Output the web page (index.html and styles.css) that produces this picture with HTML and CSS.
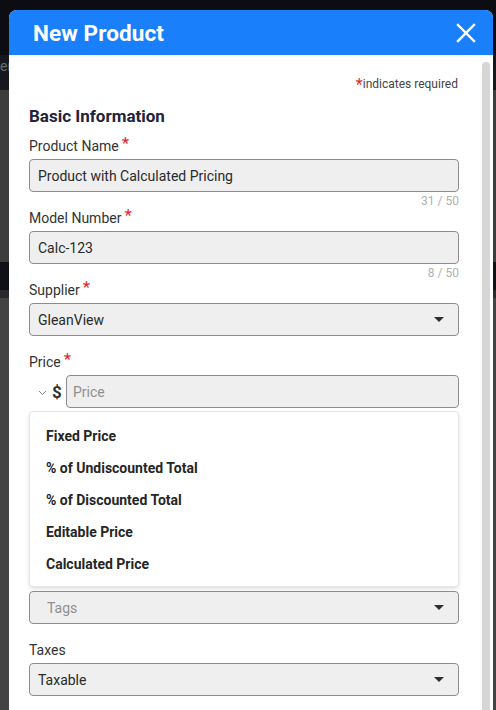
FILE: index.html
```html
<!DOCTYPE html>
<html lang="en">
<head>
<meta charset="utf-8">
<title>New Product</title>
<link rel="stylesheet" href="styles.css">
</head>
<body>
<div class="backdrop">
  <span class="backdrop-text">er</span>
</div>
<div class="dialog">
  <header class="dialog-header">
    <h1 class="dialog-title">New Product</h1>
    <button class="close-btn" aria-label="Close">
      <svg width="20" height="20" viewBox="0 0 20 20"><path d="M2 2 L18 18 M18 2 L2 18" stroke="#fff" stroke-width="2.4" stroke-linecap="square" fill="none"/></svg>
    </button>
  </header>
  <div class="dialog-body">
    <div class="content">
      <div class="required-note"><span class="req">*</span>indicates required</div>
      <h2 class="section-title">Basic Information</h2>

      <div class="field">
        <label class="field-label">Product Name<span class="req sup">*</span></label>
        <div class="input">Product with Calculated Pricing</div>
        <div class="helper">31 / 50</div>
      </div>

      <div class="field">
        <label class="field-label">Model Number<span class="req sup">*</span></label>
        <div class="input">Calc-123</div>
        <div class="helper">8 / 50</div>
      </div>

      <div class="field">
        <label class="field-label">Supplier<span class="req sup">*</span></label>
        <div class="input select"><span>GleanView</span><span class="caret"></span></div>
        <div class="helper"></div>
      </div>

      <div class="field price-field">
        <label class="field-label">Price<span class="req sup">*</span></label>
        <div class="price-row">
          <span class="chev">
            <svg width="9" height="6" viewBox="0 0 9 6"><path d="M1 1 L4.5 4.5 L8 1" stroke="#888" stroke-width="1" fill="none"/></svg>
          </span>
          <span class="dollar">$</span>
          <div class="input placeholder grow">Price</div>
        </div>
        <div class="under-menu"></div>
        <ul class="menu">
          <li>Fixed Price</li>
          <li>% of Undiscounted Total</li>
          <li>% of Discounted Total</li>
          <li>Editable Price</li>
          <li>Calculated Price</li>
        </ul>
      </div>

      <div class="field">
        <div class="input select"><span class="placeholder indent">Tags</span><span class="caret"></span></div>
        <div class="helper"></div>
      </div>

      <div class="field">
        <label class="field-label">Taxes</label>
        <div class="input select"><span>Taxable</span><span class="caret"></span></div>
      </div>
    </div>
    <div class="scroll-track"><div class="scroll-thumb"></div></div>
  </div>
</div>
</body>
</html>
```

FILE: styles.css
```css
* { box-sizing: border-box; }
html, body { margin: 0; padding: 0; }
body {
  width: 496px;
  height: 710px;
  overflow: hidden;
  position: relative;
  font-family: Roboto, "Liberation Sans", Arial, sans-serif;
  background: linear-gradient(to bottom,
    #0c0d12 0, #0c0d12 55px,
    #16181e 55px, #16181e 90px,
    #3d3d3d 90px, #3d3d3d 262px,
    #0f1116 262px, #0f1116 290px,
    #2a2a2c 290px, #2a2a2c 298px,
    #434343 298px);
}
.backdrop {
  position: absolute;
  left: 0; top: 0; width: 496px; height: 710px;
}
.backdrop-text {
  position: absolute;
  left: 0; top: 58px;
  font-size: 14px;
  color: #6a6c72;
}
.dialog {
  position: relative;
  margin: 10px 0 0 9px;
  width: 484px;
  height: 700px;
  background: #fff;
  border-radius: 8px 8px 0 0;
  overflow: hidden;
  display: flex;
  flex-direction: column;
}
.dialog-header {
  height: 45px;
  flex: none;
  background: #1a7ffb;
  display: flex;
  align-items: center;
  justify-content: space-between;
  padding: 0 17px 0 24px;
}
.dialog-title {
  margin: 0;
  color: #fff;
  font-size: 22.5px;
  font-weight: 700;
  letter-spacing: 0.1px;
}
.close-btn {
  border: 0;
  background: none;
  padding: 0;
  width: 20px;
  height: 20px;
  display: flex;
}
.dialog-body {
  flex: 1;
  display: flex;
  min-height: 0;
}
.content {
  flex: 1;
  padding: 21px 19px 0 20px;
}
.scroll-track {
  width: 15px;
  flex: none;
  padding: 7px 3px 0 4px;
}
.scroll-thumb {
  width: 8px;
  height: 100%;
  background: #d6d6d6;
  border-radius: 4px 4px 0 0;
}
.required-note {
  text-align: right;
  font-size: 12px;
  line-height: 16px;
  color: #444;
  padding-right: 1px;
}
.required-note .req {
  font-size: 16px;
  line-height: 12px;
  vertical-align: -2px;
}
.req { color: #e3262b; }
.sup {
  font-size: 17px;
  line-height: 10px;
  margin-left: 3px;
  vertical-align: 2px;
}
.section-title {
  margin: 13px 0 0;
  font-size: 17px;
  line-height: 22px;
  font-weight: 700;
  color: #23233a;
}
.field { position: relative; }
.field-label {
  display: block;
  height: 20px;
  line-height: 20px;
  margin-bottom: 3px;
  font-size: 14px;
  color: #333;
}
.section-title + .field .field-label { margin-top: 9px; }
.input {
  height: 33px;
  border: 1px solid #8c8c8c;
  border-radius: 4px;
  background: #efefef;
  font-size: 14px;
  color: #2a2a2a;
  padding: 0 8px;
  display: flex;
  align-items: center;
}
.select { justify-content: space-between; padding-right: 14px; }
.caret {
  width: 0; height: 0;
  border-left: 5px solid transparent;
  border-right: 5px solid transparent;
  border-top: 5px solid #2f2f2f;
}
.placeholder { color: #8f8f8f; }
.input.placeholder { color: #8f8f8f; padding-left: 6px; }
.indent { padding-left: 9px; }
.helper {
  height: 16px;
  padding-top: 2px;
  font-size: 12px;
  line-height: 14px;
  color: #b0b0b0;
  text-align: right;
}
.price-row {
  display: flex;
  align-items: center;
}
.chev {
  width: 22px;
  display: flex;
  justify-content: flex-end;
  padding-right: 4px;
  padding-top: 2px;
}
.dollar {
  font-size: 17px;
  font-weight: 700;
  color: #333;
  width: 15px;
  padding-left: 1px;
}
.grow { flex: 1; }
.under-menu { height: 183px; }
.menu {
  position: absolute;
  left: 0; right: 0;
  top: 59px;
  height: 176px;
  margin: 0;
  padding: 8px 0;
  list-style: none;
  background: #fff;
  border: 1px solid #e6e6e6;
  border-radius: 4px;
  box-shadow: 0 2px 4px rgba(0,0,0,0.12);
}
.menu li {
  height: 32px;
  line-height: 32px;
  padding-left: 16px;
  font-size: 14px;
  font-weight: 700;
  color: #262626;
}
```
